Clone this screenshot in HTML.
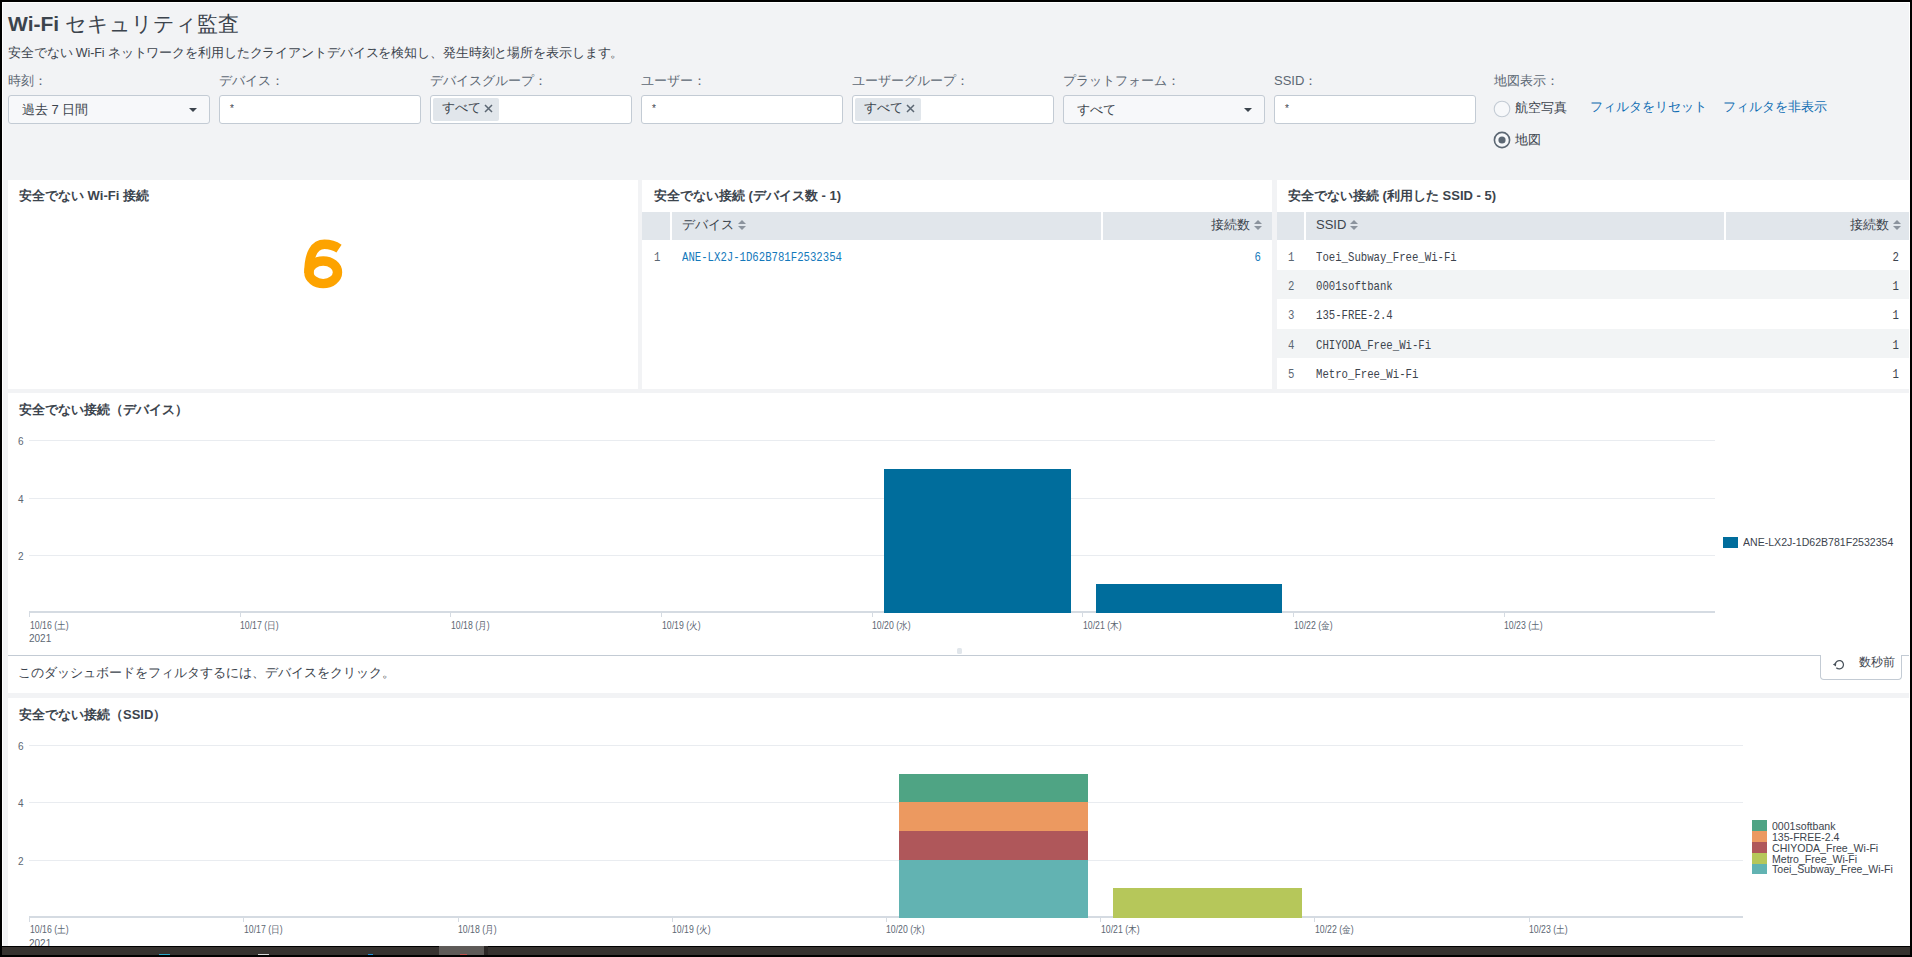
<!DOCTYPE html>
<html><head><meta charset="utf-8">
<style>
*{margin:0;padding:0;box-sizing:border-box}
html,body{width:1912px;height:957px;overflow:hidden;background:#f2f3f5}
body{font-family:"Liberation Sans",sans-serif;color:#3c444d;position:relative}
.a{position:absolute;white-space:nowrap}
.lbl{font-size:13px;color:#5c6773;top:72px}
.inp{position:absolute;top:95px;height:29px;width:202px;border:1px solid #c3cbd4;border-radius:3px;background:#fff}
.sel{background:#f7f8fa}
.panel{position:absolute;background:#fff;overflow:hidden}
.ptitle{position:absolute;font-size:13px;font-weight:bold;color:#3c444d;white-space:nowrap}
.th{position:absolute;height:28px;background:#e1e6eb}
.mono{font-family:"Liberation Mono",monospace;font-size:13px;line-height:16px;transform:scaleX(0.82);transform-origin:0 0}
.mono.r{transform-origin:100% 0}
.seltxt{top:6px;font-size:13px;line-height:16px;color:#3c444d}
.caret{position:absolute;top:12px;width:0;height:0;border-left:4px solid transparent;border-right:4px solid transparent;border-top:4px solid #3c444d}
.ast{left:10px;top:7px;font-size:10px;color:#3c444d}
.chip{position:absolute;left:2px;top:2px;height:23px;padding:0 0 0 9px;width:66px;background:#e1e6eb;border-radius:2px;font-size:13px;line-height:20px;color:#3c444d}
.chip .x{position:absolute;left:51px;top:6px;width:9px;height:9px}
.link{font-size:13px;line-height:18px;color:#0f6db3}
.thtxt{font-size:13px;line-height:18px;color:#3c444d}
.sort{display:inline-block;position:relative;width:8px;height:10px;margin-left:4px;vertical-align:-1px}
.sort:before{content:"";position:absolute;left:0;top:0;border-left:4px solid transparent;border-right:4px solid transparent;border-bottom:4.5px solid #8b939d}
.sort:after{content:"";position:absolute;left:0;top:5.5px;border-left:4px solid transparent;border-right:4px solid transparent;border-top:4.5px solid #8b939d}
.row{position:absolute;left:0;width:632px;background:#fff}
.row.alt{background:#f2f4f5}
.idx{color:#5c6773}
.ylab{font-size:10px;line-height:12px;color:#5c6773}
.xlab{font-size:10px;line-height:12px;color:#5c6773;transform:scaleX(0.87);transform-origin:0 0}
.leg{font-size:11px;line-height:13px;color:#3c444d;transform:scaleX(0.96);transform-origin:0 0}
.leg2{font-size:11px;line-height:12px;color:#3c444d;transform:scaleX(0.96);transform-origin:0 0}
</style></head>
<body>
<!-- header -->
<div class="a" style="left:8px;top:10px;font-size:21px;line-height:28px;color:#3c444d"><b style="font-weight:bold">Wi-Fi</b> セキュリティ監査</div>
<div class="a" style="left:8px;top:45px;font-size:12.5px;line-height:16px;letter-spacing:-0.11px;color:#3c444d">安全でない Wi-Fi ネットワークを利用したクライアントデバイスを検知し、発生時刻と場所を表示します。</div>

<!-- filter labels -->
<div class="a lbl" style="left:8px">時刻：</div>
<div class="a lbl" style="left:219px">デバイス：</div>
<div class="a lbl" style="left:430px">デバイスグループ：</div>
<div class="a lbl" style="left:641px">ユーザー：</div>
<div class="a lbl" style="left:852px">ユーザーグループ：</div>
<div class="a lbl" style="left:1063px">プラットフォーム：</div>
<div class="a lbl" style="left:1274px">SSID：</div>
<div class="a lbl" style="left:1494px">地図表示：</div>

<!-- inputs -->
<div class="inp sel" style="left:8px"><span class="a seltxt" style="left:13px">過去 7 日間</span><span class="caret" style="left:180px"></span></div>
<div class="inp" style="left:219px"><span class="a ast">*</span></div>
<div class="inp" style="left:430px"><span class="chip">すべて<svg class="x" viewBox="0 0 9 9"><path d="M1 1L8 8M8 1L1 8" stroke="#5c6773" stroke-width="1.5"/></svg></span></div>
<div class="inp" style="left:641px"><span class="a ast">*</span></div>
<div class="inp" style="left:852px"><span class="chip">すべて<svg class="x" viewBox="0 0 9 9"><path d="M1 1L8 8M8 1L1 8" stroke="#5c6773" stroke-width="1.5"/></svg></span></div>
<div class="inp sel" style="left:1063px"><span class="a seltxt" style="left:13px">すべて</span><span class="caret" style="left:180px"></span></div>
<div class="inp" style="left:1274px"><span class="a ast">*</span></div>

<!-- radios -->
<svg class="a" style="left:1493px;top:100px" width="18" height="18" viewBox="0 0 18 18"><circle cx="9" cy="9" r="7.8" fill="#f7f8fa" stroke="#c3cbd4" stroke-width="1.1"/></svg>
<div class="a" style="left:1515px;top:99px;font-size:13px;line-height:18px;color:#3c444d">航空写真</div>
<svg class="a" style="left:1493px;top:131px" width="18" height="18" viewBox="0 0 18 18"><circle cx="9" cy="9" r="7.6" fill="#f7f8fa" stroke="#5c6773" stroke-width="1.6"/><circle cx="9" cy="9" r="3.6" fill="#5c6773"/></svg>
<div class="a" style="left:1515px;top:131px;font-size:13px;line-height:18px;color:#3c444d">地図</div>
<div class="a link" style="left:1590px;top:98px">フィルタをリセット</div>
<div class="a link" style="left:1723px;top:98px">フィルタを非表示</div>

<!-- panels row 1 -->
<div class="panel" style="left:8px;top:180px;width:630px;height:209px">
  <div class="ptitle" style="left:11px;top:7px">安全でない Wi-Fi 接続</div>
</div>
<svg class="a" style="left:290px;top:230px" width="70" height="70" viewBox="290 230 70 70"><ellipse cx="323.2" cy="272.3" rx="14.3" ry="11.3" fill="none" stroke="#fda300" stroke-width="9.4"/><path d="M308.9 273C308.9 253 315 244.3 324.5 244.3C331 244.3 335.5 246.3 339 248.6" fill="none" stroke="#fda300" stroke-width="9.4"/></svg>
<div class="panel" style="left:642px;top:180px;width:630px;height:209px">
  <div class="ptitle" style="left:12px;top:7px">安全でない接続 (デバイス数 - 1)</div>
  <div class="th" style="left:0;top:32px;width:28px"></div>
  <div class="th" style="left:30px;top:32px;width:429px"></div>
  <div class="th" style="left:461px;top:32px;width:169px"></div>
  <div class="a thtxt" style="left:40px;top:36px">デバイス<span class="sort"></span></div>
  <div class="a thtxt" style="right:10px;top:36px">接続数<span class="sort"></span></div>
  <div class="a mono idx" style="left:12px;top:70px">1</div>
  <div class="a mono" style="left:40px;top:70px;color:#1479bb">ANE-LX2J-1D62B781F2532354</div>
  <div class="a mono r" style="right:11px;top:70px;color:#1479bb">6</div>
</div>
<div class="panel" style="left:1277px;top:180px;width:632px;height:209px">
  <div class="ptitle" style="left:11px;top:7px">安全でない接続 (利用した SSID - 5)</div>
  <div class="th" style="left:0;top:32px;width:27px"></div>
  <div class="th" style="left:29px;top:32px;width:418px"></div>
  <div class="th" style="left:449px;top:32px;width:183px"></div>
  <div class="a thtxt" style="left:39px;top:36px">SSID<span class="sort"></span></div>
  <div class="a thtxt" style="right:8px;top:36px">接続数<span class="sort"></span></div>
  <div class="row" style="top:60px;height:30px"></div>
  <div class="row alt" style="top:90px;height:29px"></div>
  <div class="row" style="top:119px;height:30px"></div>
  <div class="row alt" style="top:149px;height:29px"></div>
  <div class="row" style="top:178px;height:31px"></div>
  <div class="a mono idx" style="left:11px;top:70px">1</div>
  <div class="a mono" style="left:39px;top:70px">Toei_Subway_Free_Wi-Fi</div>
  <div class="a mono r" style="right:10px;top:70px">2</div>
  <div class="a mono idx" style="left:11px;top:99px">2</div>
  <div class="a mono" style="left:39px;top:99px">0001softbank</div>
  <div class="a mono r" style="right:10px;top:99px">1</div>
  <div class="a mono idx" style="left:11px;top:128px">3</div>
  <div class="a mono" style="left:39px;top:128px">135-FREE-2.4</div>
  <div class="a mono r" style="right:10px;top:128px">1</div>
  <div class="a mono idx" style="left:11px;top:158px">4</div>
  <div class="a mono" style="left:39px;top:158px">CHIYODA_Free_Wi-Fi</div>
  <div class="a mono r" style="right:10px;top:158px">1</div>
  <div class="a mono idx" style="left:11px;top:187px">5</div>
  <div class="a mono" style="left:39px;top:187px">Metro_Free_Wi-Fi</div>
  <div class="a mono r" style="right:10px;top:187px">1</div>
</div>

<!-- panel row 2 -->
<div class="panel" style="left:8px;top:393px;width:1902px;height:300px">
  <div class="ptitle" style="left:11px;top:8px">安全でない接続（デバイス）</div>
  <div class="a" style="left:0;top:262px;width:1902px;height:1px;background:#c3cbd4"></div>
  <div class="a" style="left:10px;top:271px;font-size:12.9px;line-height:18px;color:#3c444d">このダッシュボードをフィルタするには、デバイスをクリック。</div>
  <div class="a" style="left:1812px;top:262px;width:82px;height:25px;border:1px solid #c3cbd4;border-top:none;border-radius:0 0 4px 4px;background:#fff"></div>
  <svg class="a" style="left:1824px;top:265px" width="14" height="14" viewBox="0 0 14 14"><path d="M3.1 6.7A4.2 4.2 0 1 1 4.3 9.7" fill="none" stroke="#4a535c" stroke-width="1.25"/><path d="M0.9 6.6L4.2 4.6L4.0 8.4Z" fill="#4a535c"/></svg>
  <div class="a" style="left:1851px;top:261px;font-size:12px;line-height:16px;color:#3c444d">数秒前</div>
  <div class="a" style="left:1715px;top:144px;width:15px;height:11px;background:#006d9c"></div>
  <div class="a leg" style="left:1735px;top:143px">ANE-LX2J-1D62B781F2532354</div>
</div>
<svg class="a" style="left:0;top:0" width="1912" height="957" viewBox="0 0 1912 957" shape-rendering="crispEdges">
<rect x="29" y="555" width="1685.6" height="1" fill="#e9ecf0"/>
<rect x="29" y="498" width="1685.6" height="1" fill="#e9ecf0"/>
<rect x="29" y="440" width="1685.6" height="1" fill="#e9ecf0"/>
<rect x="29" y="611" width="1685.6" height="2" fill="#d5dbe2"/>
<rect x="884.2" y="469.1" width="186.6" height="143.9" fill="#006d9c"/>
<rect x="1095.5" y="583.6" width="186.0" height="29.4" fill="#006d9c"/>
<rect x="29" y="612" width="1" height="5" fill="#d5dbe2"/>
<rect x="240" y="612" width="1" height="5" fill="#d5dbe2"/>
<rect x="450" y="612" width="1" height="5" fill="#d5dbe2"/>
<rect x="661" y="612" width="1" height="5" fill="#d5dbe2"/>
<rect x="872" y="612" width="1" height="5" fill="#d5dbe2"/>
<rect x="1082" y="612" width="1" height="5" fill="#d5dbe2"/>
<rect x="1293" y="612" width="1" height="5" fill="#d5dbe2"/>
<rect x="1504" y="612" width="1" height="5" fill="#d5dbe2"/>
</svg>
<div class="a ylab" style="left:18px;top:551px">2</div>
<div class="a ylab" style="left:18px;top:494px">4</div>
<div class="a ylab" style="left:18px;top:436px">6</div>
<div class="a xlab" style="left:30px;top:619.7px">10/16 (土)</div>
<div class="a xlab" style="left:240px;top:619.7px">10/17 (日)</div>
<div class="a xlab" style="left:451px;top:619.7px">10/18 (月)</div>
<div class="a xlab" style="left:662px;top:619.7px">10/19 (火)</div>
<div class="a xlab" style="left:872px;top:619.7px">10/20 (水)</div>
<div class="a xlab" style="left:1083px;top:619.7px">10/21 (木)</div>
<div class="a xlab" style="left:1294px;top:619.7px">10/22 (金)</div>
<div class="a xlab" style="left:1504px;top:619.7px">10/23 (土)</div>
<div class="a ylab" style="left:29px;top:633px">2021</div>
<div class="a" style="left:957px;top:648px;width:5px;height:6px;border-radius:1.5px;background:#e1e6eb"></div>
<!-- panel row 3 -->
<div class="panel" style="left:8px;top:698px;width:1902px;height:260px">
  <div class="ptitle" style="left:11px;top:8px">安全でない接続（SSID）</div>
  <div class="a" style="left:1744px;top:122px;width:15px;height:11px;background:#4fa484"></div>
  <div class="a" style="left:1744px;top:133px;width:15px;height:11px;background:#ec9960"></div>
  <div class="a" style="left:1744px;top:144px;width:15px;height:11px;background:#af575a"></div>
  <div class="a" style="left:1744px;top:155px;width:15px;height:11px;background:#b6c75a"></div>
  <div class="a" style="left:1744px;top:166px;width:15px;height:10px;background:#62b3b2"></div>
  <div class="a leg2" style="left:1764px;top:122px">0001softbank</div>
  <div class="a leg2" style="left:1764px;top:133px">135-FREE-2.4</div>
  <div class="a leg2" style="left:1764px;top:144px">CHIYODA_Free_Wi-Fi</div>
  <div class="a leg2" style="left:1764px;top:155px">Metro_Free_Wi-Fi</div>
  <div class="a leg2" style="left:1764px;top:165px">Toei_Subway_Free_Wi-Fi</div>
</div>
<svg class="a" style="left:0;top:0" width="1912" height="957" viewBox="0 0 1912 957" shape-rendering="crispEdges">
<rect x="29" y="860" width="1714.0" height="1" fill="#e9ecf0"/>
<rect x="29" y="802" width="1714.0" height="1" fill="#e9ecf0"/>
<rect x="29" y="745" width="1714.0" height="1" fill="#e9ecf0"/>
<rect x="29" y="916" width="1714.0" height="2" fill="#d5dbe2"/>
<rect x="898.9" y="859.7" width="189.1" height="58.0" fill="#62b3b2"/>
<rect x="898.9" y="831.0" width="189.1" height="28.6" fill="#af575a"/>
<rect x="898.9" y="802.4" width="189.1" height="28.6" fill="#ec9960"/>
<rect x="898.9" y="773.8" width="189.1" height="28.6" fill="#4fa484"/>
<rect x="1112.7" y="888.3" width="188.9" height="29.4" fill="#b6c75a"/>
<rect x="29" y="917" width="1" height="5" fill="#d5dbe2"/>
<rect x="243" y="917" width="1" height="5" fill="#d5dbe2"/>
<rect x="458" y="917" width="1" height="5" fill="#d5dbe2"/>
<rect x="672" y="917" width="1" height="5" fill="#d5dbe2"/>
<rect x="886" y="917" width="1" height="5" fill="#d5dbe2"/>
<rect x="1100" y="917" width="1" height="5" fill="#d5dbe2"/>
<rect x="1314" y="917" width="1" height="5" fill="#d5dbe2"/>
<rect x="1529" y="917" width="1" height="5" fill="#d5dbe2"/>
</svg>
<div class="a ylab" style="left:18px;top:856px">2</div>
<div class="a ylab" style="left:18px;top:798px">4</div>
<div class="a ylab" style="left:18px;top:741px">6</div>
<div class="a xlab" style="left:30px;top:924.4px">10/16 (土)</div>
<div class="a xlab" style="left:244px;top:924.4px">10/17 (日)</div>
<div class="a xlab" style="left:458px;top:924.4px">10/18 (月)</div>
<div class="a xlab" style="left:672px;top:924.4px">10/19 (火)</div>
<div class="a xlab" style="left:886px;top:924.4px">10/20 (水)</div>
<div class="a xlab" style="left:1101px;top:924.4px">10/21 (木)</div>
<div class="a xlab" style="left:1315px;top:924.4px">10/22 (金)</div>
<div class="a xlab" style="left:1529px;top:924.4px">10/23 (土)</div>
<div class="a ylab" style="left:29px;top:938px">2021</div>

<!-- screen frame -->
<div class="a" style="left:0;top:0;width:1912px;height:2px;background:#000"></div>
<div class="a" style="left:0;top:0;width:2px;height:957px;background:#000"></div>
<div class="a" style="left:1910px;top:0;width:2px;height:957px;background:#000"></div>
<div class="a" style="left:2px;top:2px;width:1908px;height:1px;background:#fff"></div>
<div class="a" style="left:2px;top:2px;width:1px;height:944px;background:#fff"></div>
<div class="a" style="left:1909px;top:2px;width:1px;height:944px;background:#fff"></div>
<div class="a" style="left:0;top:946px;width:1912px;height:11px;background:#000"></div>
<div class="a" style="left:2px;top:947px;width:1908px;height:8px;background:#36322f"></div>
<div class="a" style="left:439px;top:946px;width:45px;height:9px;background:#5e5b58"></div>
<div class="a" style="left:484px;top:946px;width:4px;height:9px;background:#2a2624"></div>
<div class="a" style="left:159px;top:954px;width:11px;height:1px;background:#2aa6c8"></div>
<div class="a" style="left:258px;top:954px;width:11px;height:1px;background:#d8d8d8"></div>
<div class="a" style="left:368px;top:954px;width:5px;height:1px;background:#1e8fd8"></div>
<div class="a" style="left:460px;top:954px;width:7px;height:1px;background:#c0504a"></div>
</body></html>
